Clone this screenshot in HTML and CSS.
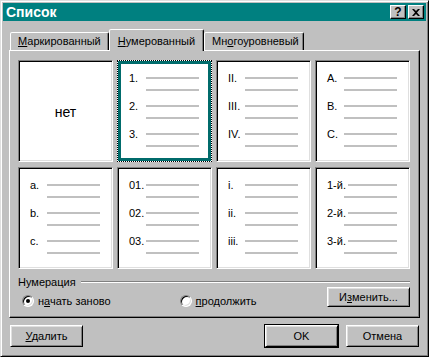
FILE: index.html
```html
<!DOCTYPE html>
<html lang="ru">
<head>
  <meta charset="UTF-8">
  <title>Список</title>
  <link rel="stylesheet" href="styles.css">
</head>
<body>
  <div class="window">
    <div class="titlebar">
      <span class="title">Список</span>
      <div class="title-buttons">
        <span class="tbtn help">?</span>
        <span class="tbtn">
          <svg width="8" height="7" viewBox="0 0 8 7">
            <path d="M0 0h2l2 2 2-2h2L5 3.5 8 7H6L4 5 2 7H0l3-3.5z" fill="#000"/>
          </svg>
        </span>
      </div>
    </div>

    <div class="content">
      <div class="tabs">
        <div class="tab"><u>М</u>аркированный</div>
        <div class="tab active"><u>Н</u>умерованный</div>
        <div class="tab narrow">Мн<u>о</u>гоуровневый</div>
      </div>

      <div class="panel">
        <div class="grid">
          <div class="cell none">нет</div>

          <div class="cell selected">
            <div class="item"><div class="row"><span class="num">1.</span><i class="bar"></i></div><i class="bar sub"></i></div>
            <div class="item"><div class="row"><span class="num">2.</span><i class="bar"></i></div><i class="bar sub"></i></div>
            <div class="item"><div class="row"><span class="num">3.</span><i class="bar"></i></div><i class="bar sub"></i></div>
          </div>

          <div class="cell">
            <div class="item"><div class="row"><span class="num">II.</span><i class="bar"></i></div><i class="bar sub"></i></div>
            <div class="item"><div class="row"><span class="num">III.</span><i class="bar"></i></div><i class="bar sub"></i></div>
            <div class="item"><div class="row"><span class="num">IV.</span><i class="bar"></i></div><i class="bar sub"></i></div>
          </div>

          <div class="cell">
            <div class="item"><div class="row"><span class="num">A.</span><i class="bar"></i></div><i class="bar sub"></i></div>
            <div class="item"><div class="row"><span class="num">B.</span><i class="bar"></i></div><i class="bar sub"></i></div>
            <div class="item"><div class="row"><span class="num">C.</span><i class="bar"></i></div><i class="bar sub"></i></div>
          </div>

          <div class="cell">
            <div class="item"><div class="row"><span class="num">a.</span><i class="bar"></i></div><i class="bar sub"></i></div>
            <div class="item"><div class="row"><span class="num">b.</span><i class="bar"></i></div><i class="bar sub"></i></div>
            <div class="item"><div class="row"><span class="num">c.</span><i class="bar"></i></div><i class="bar sub"></i></div>
          </div>

          <div class="cell">
            <div class="item"><div class="row"><span class="num">01.</span><i class="bar"></i></div><i class="bar sub"></i></div>
            <div class="item"><div class="row"><span class="num">02.</span><i class="bar"></i></div><i class="bar sub"></i></div>
            <div class="item"><div class="row"><span class="num">03.</span><i class="bar"></i></div><i class="bar sub"></i></div>
          </div>

          <div class="cell">
            <div class="item"><div class="row"><span class="num">i.</span><i class="bar"></i></div><i class="bar sub"></i></div>
            <div class="item"><div class="row"><span class="num">ii.</span><i class="bar"></i></div><i class="bar sub"></i></div>
            <div class="item"><div class="row"><span class="num">iii.</span><i class="bar"></i></div><i class="bar sub"></i></div>
          </div>

          <div class="cell">
            <div class="item"><div class="row"><span class="num">1-й.</span><i class="bar"></i></div><i class="bar sub"></i></div>
            <div class="item"><div class="row"><span class="num">2-й.</span><i class="bar"></i></div><i class="bar sub"></i></div>
            <div class="item"><div class="row"><span class="num">3-й.</span><i class="bar"></i></div><i class="bar sub"></i></div>
          </div>
        </div>

        <div class="group">
          <div class="group-title"><span>Нумерация</span><span class="rule"></span></div>
          <div class="group-row">
            <label class="choice"><span class="radio checked"></span><span>н<u>а</u>чать заново</span></label>
            <label class="choice"><span class="radio"></span><span><u>п</u>родолжить</span></label>
            <button class="btn change">И<u>з</u>менить...</button>
          </div>
        </div>
      </div>

      <div class="footer">
        <button class="btn"><u>У</u>далить</button>
        <div class="footer-right">
          <button class="btn default">OK</button>
          <button class="btn">Отмена</button>
        </div>
      </div>
    </div>
  </div>
</body>
</html>
```

FILE: styles.css
```css
body {
  margin: 0;
  font-family: 'Liberation Sans', Arial, sans-serif;
  font-size: 11px;
  color: #000;
  background: #c0c0c0;
}
u {
  text-decoration: underline;
  text-underline-offset: 1px;
}
.window {
  box-sizing: border-box;
  width: 429px;
  height: 357px;
  padding: 2px;
  background: #c0c0c0;
  border: 1px solid;
  border-color: #dfdfdf #000 #000 #dfdfdf;
  box-shadow: inset 1px 1px #fff, inset -1px -1px #808080;
}
.titlebar {
  display: flex;
  align-items: center;
  justify-content: space-between;
  height: 18px;
  padding: 0 2px 0 3px;
  background: #008080;
  color: #fff;
}
.title {
  font-size: 14px;
  font-weight: bold;
}
.title-buttons {
  display: flex;
  gap: 2px;
}
.tbtn {
  box-sizing: border-box;
  display: flex;
  align-items: center;
  justify-content: center;
  width: 16px;
  height: 14px;
  background: #c0c0c0;
  color: #000;
  border: 1px solid;
  border-color: #fff #000 #000 #fff;
  box-shadow: inset -1px -1px #808080;
}
.tbtn.help {
  font-weight: bold;
  font-size: 12px;
  line-height: 12px;
}
.content {
  padding: 8px 6px 0 6px;
}
.tabs {
  display: flex;
  align-items: flex-end;
  height: 21px;
  padding-left: 1px;
}
.tab {
  box-sizing: border-box;
  height: 18px;
  padding: 0 7px;
  line-height: 16px;
  border: 1px solid;
  border-bottom: none;
  border-color: #fff #000 transparent #fff;
  border-radius: 2px 2px 0 0;
  box-shadow: inset -1px 0 #808080;
  background: #c0c0c0;
}
.tab.active {
  position: relative;
  z-index: 1;
  height: 22px;
  margin-bottom: -1px;
  padding: 3px 8px 0;
}
.tab.narrow {
  padding: 0 4px 0 7px;
}
.panel {
  padding: 9px 9px 10px 8px;
  border: 1px solid;
  border-color: #fff #000 #000 #fff;
  box-shadow: inset -1px -1px #808080;
}
.grid {
  display: grid;
  grid-template-columns: repeat(4, 95px);
  grid-auto-rows: 102px;
  gap: 5px 4px;
}
.cell {
  box-sizing: border-box;
  padding: 11px 12px 0 11px;
  background: #fff;
  border: 1px solid;
  border-color: #808080 #fff #fff #808080;
  box-shadow: inset 1px 1px #000, inset -1px -1px #dfdfdf;
}
.cell.none {
  display: flex;
  align-items: center;
  justify-content: center;
  padding: 2px 0 0;
  font-size: 14px;
}
.cell.selected {
  border: 1px dotted #000;
  box-shadow: inset 0 0 0 3px #006b6b;
}
.item {
  display: flex;
  flex-direction: column;
  height: 28px;
}
.row {
  display: flex;
  align-items: center;
  height: 12px;
}
.num {
  min-width: 17px;
  padding-right: 2px;
  box-sizing: border-box;
  line-height: 12px;
}
.bar {
  display: block;
  flex: 1;
  height: 2px;
  background: #c0c0c0;
}
.bar.sub {
  flex: none;
  margin: 5px 0 0 17px;
}
.group {
  margin-top: 7px;
}
.group-title {
  display: flex;
  align-items: center;
  gap: 5px;
  height: 12px;
  line-height: 12px;
}
.rule {
  flex: 1;
  border-top: 1px solid #808080;
  border-bottom: 1px solid #fff;
}
.group-row {
  display: flex;
  align-items: flex-end;
  margin-top: -1px;
}
.choice {
  display: flex;
  align-items: center;
  gap: 4px;
  height: 12px;
  margin-left: 4px;
}
.choice + .choice {
  margin-left: 69px;
}
.radio {
  box-sizing: border-box;
  position: relative;
  width: 12px;
  height: 12px;
  border-radius: 50%;
  background: #fff;
  border: 1px solid;
  border-color: #808080 #fff #fff #808080;
  box-shadow: inset 1px 1px #000, inset -1px -1px #dfdfdf;
}
.radio.checked::after {
  content: '';
  position: absolute;
  left: 3px;
  top: 3px;
  width: 4px;
  height: 4px;
  border-radius: 50%;
  background: #000;
}
.btn {
  box-sizing: border-box;
  width: 73px;
  height: 22px;
  padding: 0;
  font: inherit;
  color: #000;
  background: #c0c0c0;
  border: 1px solid;
  border-color: #fff #000 #000 #fff;
  box-shadow: inset 1px 1px #dfdfdf, inset -1px -1px #808080;
}
.btn.change {
  width: 83px;
  height: 20px;
  margin-left: auto;
}
.btn.default {
  box-shadow: inset 1px 1px #dfdfdf, inset -1px -1px #808080, 0 0 0 1px #000;
}
.footer {
  display: flex;
  justify-content: space-between;
  margin-top: 7px;
  padding: 0 1px;
}
.footer-right {
  display: flex;
  gap: 8px;
}
```
